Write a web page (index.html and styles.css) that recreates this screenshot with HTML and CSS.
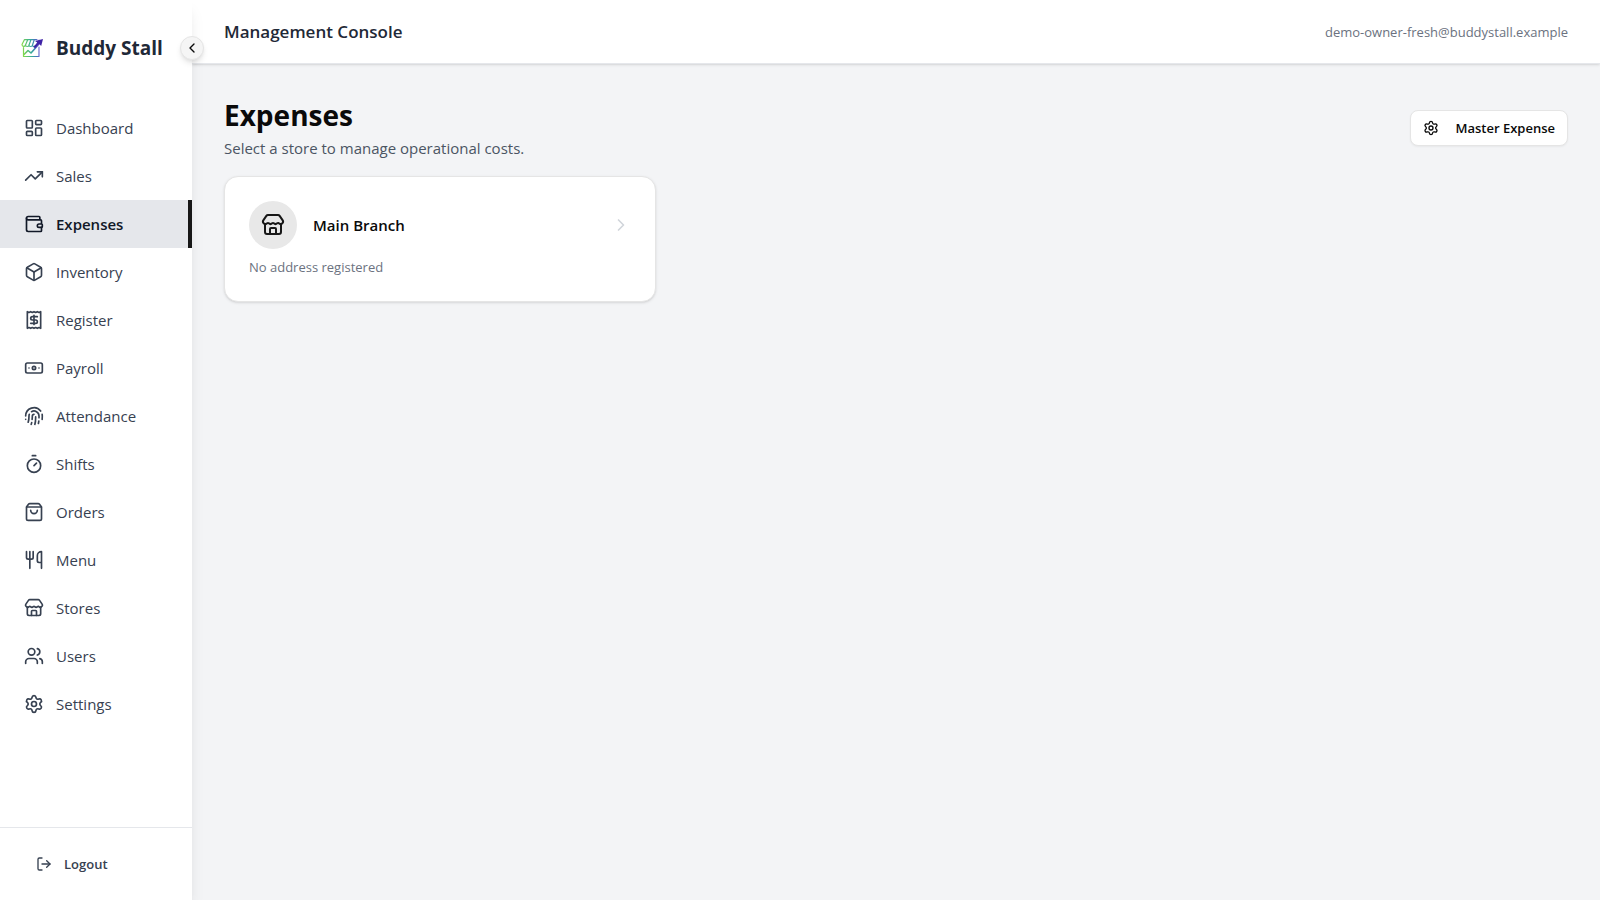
FILE: index.html
```html
<!DOCTYPE html>
<html lang="en">
<head>
    <meta charset="UTF-8">
    <meta name="viewport" content="width=device-width, initial-scale=1">
    <title>Buddy Stall</title>
    <link rel="stylesheet" href="styles.css">
</head>
<body>
    <div class="app">
        <aside class="sidebar">
            <div class="brand">
                <svg class="logo" viewBox="0 0 24 24" fill="none" aria-hidden="true">
                    <defs>
                        <linearGradient id="logoFill" gradientUnits="userSpaceOnUse" x1="1" y1="11" x2="21" y2="9">
                            <stop offset="0" stop-color="#8fe23c"/>
                            <stop offset=".5" stop-color="#35a99a"/>
                            <stop offset=".75" stop-color="#4a6fc0"/>
                            <stop offset="1" stop-color="#9a6fe0"/>
                        </linearGradient>
                    </defs>
                    <g stroke="url(#logoFill)" stroke-width="1.2" stroke-linejoin="round" stroke-linecap="round">
                        <path d="M17 3.600H4.500L2 8.500c0 2.500 3 2.500 3.500.5 0 2 3.500 2 3.500 0 0 2 3.500 2 3.500 0 0 1.500 1.500 2 2.500 1M7.800 3.600L5.500 9M11 3.600L9 9M14.300 3.600L12.500 9"/>
                        <path d="M3.500 11.500v9H19V11M19 4v2"/>
                        <path d="M4 18.500l4-4 3 2.500L19 8" stroke-width="1.600"/>
                    </g>
                    <path d="M23 3l-8 2 2.200 1.500-3.700 4.500 1.500 1.200 4.200-4.200 2 2z" fill="#3f23a6"/>
                </svg>
                <span class="brand-name">Buddy Stall</span>
                <button class="toggle" type="button" aria-label="Collapse sidebar">
                    <svg class="icon icon-sm" viewBox="0 0 24 24"><path d="m15 18-6-6 6-6"/></svg>
                </button>
            </div>
            <nav class="nav">
                <a class="nav-link" href="#">
                    <svg class="icon" viewBox="0 0 24 24"><rect width="7" height="9" x="3" y="3" rx="1"/><rect width="7" height="5" x="14" y="3" rx="1"/><rect width="7" height="9" x="14" y="12" rx="1"/><rect width="7" height="5" x="3" y="16" rx="1"/></svg>
                    <span>Dashboard</span>
                </a>
                <a class="nav-link" href="#">
                    <svg class="icon" viewBox="0 0 24 24"><path d="M16 7h6v6"/><path d="m22 7-8.500 8.500-5-5L2 17"/></svg>
                    <span>Sales</span>
                </a>
                <a class="nav-link active" href="#" aria-current="page">
                    <svg class="icon" viewBox="0 0 24 24"><path d="M19 7V4a1 1 0 0 0-1-1H5a2 2 0 0 0 0 4h15a1 1 0 0 1 1 1v4h-3a2 2 0 0 0 0 4h3a1 1 0 0 0 1-1v-2a1 1 0 0 0-1-1"/><path d="M3 5v14a2 2 0 0 0 2 2h15a1 1 0 0 0 1-1v-4"/></svg>
                    <span>Expenses</span>
                </a>
                <a class="nav-link" href="#">
                    <svg class="icon" viewBox="0 0 24 24"><path d="M21 8a2 2 0 0 0-1-1.730l-7-4a2 2 0 0 0-2 0l-7 4A2 2 0 0 0 3 8v8a2 2 0 0 0 1 1.730l7 4a2 2 0 0 0 2 0l7-4A2 2 0 0 0 21 16Z"/><path d="m3.300 7 8.700 5 8.700-5"/><path d="M12 22V12"/></svg>
                    <span>Inventory</span>
                </a>
                <a class="nav-link" href="#">
                    <svg class="icon" viewBox="0 0 24 24"><path d="M4 2v20l2-1 2 1 2-1 2 1 2-1 2 1 2-1 2 1V2l-2 1-2-1-2 1-2-1-2 1-2-1-2 1Z"/><path d="M16 8h-6a2 2 0 1 0 0 4h4a2 2 0 1 1 0 4H8"/><path d="M12 17.500v-11"/></svg>
                    <span>Register</span>
                </a>
                <a class="nav-link" href="#">
                    <svg class="icon" viewBox="0 0 24 24"><rect width="20" height="12" x="2" y="6" rx="2"/><circle cx="12" cy="12" r="2"/><path d="M6 12h.01M18 12h.01"/></svg>
                    <span>Payroll</span>
                </a>
                <a class="nav-link" href="#">
                    <svg class="icon" viewBox="0 0 24 24"><path d="M12 10a2 2 0 0 0-2 2c0 1.020-.1 2.510-.26 4"/><path d="M14 13.120c0 2.380 0 6.380-1 8.880"/><path d="M17.290 21.020c.12-.6.430-2.300.5-3.020"/><path d="M2 12a10 10 0 0 1 18-6"/><path d="M2 16h.01"/><path d="M21.800 16c.2-2 .131-5.354 0-6"/><path d="M5 19.500C5.500 18 6 15 6 12a6 6 0 0 1 .34-2"/><path d="M8.650 22c.21-.66.450-1.320.570-2"/><path d="M9 6.800a6 6 0 0 1 9 5.200v2"/></svg>
                    <span>Attendance</span>
                </a>
                <a class="nav-link" href="#">
                    <svg class="icon" viewBox="0 0 24 24"><path d="M10 2h4"/><path d="m12 14 3-3"/><circle cx="12" cy="14" r="8"/></svg>
                    <span>Shifts</span>
                </a>
                <a class="nav-link" href="#">
                    <svg class="icon" viewBox="0 0 24 24"><path d="M16 10a4 4 0 0 1-8 0"/><path d="M3.103 6.034h17.794"/><path d="M3.400 5.467a2 2 0 0 0-.4 1.200V20a2 2 0 0 0 2 2h14a2 2 0 0 0 2-2V6.667a2 2 0 0 0-.4-1.200l-2-2.667A2 2 0 0 0 17 2H7a2 2 0 0 0-1.600.8z"/></svg>
                    <span>Orders</span>
                </a>
                <a class="nav-link" href="#">
                    <svg class="icon" viewBox="0 0 24 24"><path d="M3 2v7c0 1.100.9 2 2 2h4a2 2 0 0 0 2-2V2"/><path d="M7 2v20"/><path d="M21 15V2a5 5 0 0 0-5 5v6c0 1.100.9 2 2 2h3Zm0 0v7"/></svg>
                    <span>Menu</span>
                </a>
                <a class="nav-link" href="#">
                    <svg class="icon" viewBox="0 0 24 24"><path d="M15 21v-5a1 1 0 0 0-1-1h-4a1 1 0 0 0-1 1v5"/><path d="M17.774 10.310a1.120 1.120 0 0 0-1.549 0 2.500 2.500 0 0 1-3.451 0 1.120 1.120 0 0 0-1.548 0 2.500 2.500 0 0 1-3.452 0 1.120 1.120 0 0 0-1.549 0 2.500 2.500 0 0 1-3.770-3.248l2.889-4.184A2 2 0 0 1 7 2h10a2 2 0 0 1 1.653.873l2.895 4.192a2.500 2.500 0 0 1-3.774 3.244"/><path d="M4 10.950V19a2 2 0 0 0 2 2h12a2 2 0 0 0 2-2v-8.050"/></svg>
                    <span>Stores</span>
                </a>
                <a class="nav-link" href="#">
                    <svg class="icon" viewBox="0 0 24 24"><path d="M16 21v-2a4 4 0 0 0-4-4H6a4 4 0 0 0-4 4v2"/><path d="M16 3.128a4 4 0 0 1 0 7.744"/><path d="M22 21v-2a4 4 0 0 0-3-3.870"/><circle cx="9" cy="7" r="4"/></svg>
                    <span>Users</span>
                </a>
                <a class="nav-link" href="#">
                    <svg class="icon" viewBox="0 0 24 24"><path d="M9.671 4.136a2.340 2.340 0 0 1 4.659 0 2.340 2.340 0 0 0 3.319 1.915 2.340 2.340 0 0 1 2.330 4.033 2.340 2.340 0 0 0 0 3.831 2.340 2.340 0 0 1-2.330 4.033 2.340 2.340 0 0 0-3.319 1.915 2.340 2.340 0 0 1-4.659 0 2.340 2.340 0 0 0-3.320-1.915 2.340 2.340 0 0 1-2.330-4.033 2.340 2.340 0 0 0 0-3.831A2.340 2.340 0 0 1 6.350 6.051a2.340 2.340 0 0 0 3.319-1.915"/><circle cx="12" cy="12" r="3"/></svg>
                    <span>Settings</span>
                </a>
            </nav>
            <div class="sidebar-footer">
                <button class="logout" type="button">
                    <svg class="icon icon-sm" viewBox="0 0 24 24"><path d="m16 17 5-5-5-5"/><path d="M21 12H9"/><path d="M9 21H5a2 2 0 0 1-2-2V5a2 2 0 0 1 2-2h4"/></svg>
                    <span>Logout</span>
                </button>
            </div>
        </aside>
        <div class="content">
            <header class="topbar">
                <h2 class="topbar-title">Management Console</h2>
                <span class="topbar-user">demo-owner-fresh@buddystall.example</span>
            </header>
            <main class="main">
                <div class="page-head">
                    <div>
                        <h1 class="page-title">Expenses</h1>
                        <p class="page-desc">Select a store to manage operational costs.</p>
                    </div>
                    <button class="master-btn" type="button">
                        <svg class="icon icon-sm" viewBox="0 0 24 24"><path d="M9.671 4.136a2.340 2.340 0 0 1 4.659 0 2.340 2.340 0 0 0 3.319 1.915 2.340 2.340 0 0 1 2.330 4.033 2.340 2.340 0 0 0 0 3.831 2.340 2.340 0 0 1-2.330 4.033 2.340 2.340 0 0 0-3.319 1.915 2.340 2.340 0 0 1-4.659 0 2.340 2.340 0 0 0-3.320-1.915 2.340 2.340 0 0 1-2.330-4.033 2.340 2.340 0 0 0 0-3.831A2.340 2.340 0 0 1 6.350 6.051a2.340 2.340 0 0 0 3.319-1.915"/><circle cx="12" cy="12" r="3"/></svg>
                        <span>Master Expense</span>
                    </button>
                </div>
                <div class="store-grid">
                    <a class="store-card" href="#">
                        <div class="store-row">
                            <span class="store-icon">
                                <svg class="icon icon-lg" viewBox="0 0 24 24"><path d="M15 21v-5a1 1 0 0 0-1-1h-4a1 1 0 0 0-1 1v5"/><path d="M17.774 10.310a1.120 1.120 0 0 0-1.549 0 2.500 2.500 0 0 1-3.451 0 1.120 1.120 0 0 0-1.548 0 2.500 2.500 0 0 1-3.452 0 1.120 1.120 0 0 0-1.549 0 2.500 2.500 0 0 1-3.770-3.248l2.889-4.184A2 2 0 0 1 7 2h10a2 2 0 0 1 1.653.873l2.895 4.192a2.500 2.500 0 0 1-3.774 3.244"/><path d="M4 10.950V19a2 2 0 0 0 2 2h12a2 2 0 0 0 2-2v-8.050"/></svg>
                            </span>
                            <h3 class="store-name">Main Branch</h3>
                            <svg class="icon store-arrow" viewBox="0 0 24 24"><path d="m9 18 6-6-6-6"/></svg>
                        </div>
                        <p class="store-address">No address registered</p>
                    </a>
                </div>
            </main>
        </div>
    </div>
</body>
</html>
```
FILE: styles.css
```css
*{box-sizing:border-box;margin:0;padding:0}
body{font-family:"Open Sans","Noto Sans",sans-serif;font-size:15px;line-height:24px;color:#0a0a0a;background:#f3f4f6}
a{color:inherit;text-decoration:none}
button{font:inherit;color:inherit;border:0;background:none;cursor:pointer}
.app{display:flex;min-height:100vh}

.icon{width:20px;height:20px;flex:none;fill:none;stroke:currentColor;stroke-width:2;stroke-linecap:round;stroke-linejoin:round}
.icon-sm{width:16px;height:16px}
.icon-lg{width:24px;height:24px}

/* sidebar */
.sidebar{position:relative;z-index:1;display:flex;flex-direction:column;flex:none;width:192px;background:#fff;box-shadow:0 10px 15px -3px rgba(0,0,0,.1),0 4px 6px -4px rgba(0,0,0,.1)}
.brand{position:relative;display:flex;align-items:center;gap:12px;height:96px;padding-left:20px}
.logo{width:24px;height:24px;flex:none}
.brand-name{font-size:19px;font-weight:700;line-height:25px;color:#1f2937;white-space:nowrap}
.toggle{position:absolute;top:36px;right:-12px;display:flex;align-items:center;justify-content:center;width:24px;height:24px;border:1px solid #e5e5e5;border-radius:50%;background:#f5f5f5;box-shadow:0 4px 6px -1px rgba(0,0,0,.1),0 2px 4px -2px rgba(0,0,0,.1)}
.nav{flex:1;padding-top:8px}
.nav-link{display:flex;align-items:center;gap:12px;height:48px;padding-left:24px;color:#374151}
.nav-link.active{border-right:4px solid #171717;background:#e5e7eb;color:#111827;font-weight:600}
.sidebar-footer{padding:16px;border-top:1px solid #e5e7eb}
.logout{display:flex;align-items:center;gap:12px;width:100%;height:40px;padding-left:20px;font-size:13px;font-weight:600;color:#374151}

/* top bar */
.content{display:flex;flex-direction:column;flex:1;min-width:0}
.topbar{display:flex;align-items:center;justify-content:space-between;height:64px;padding:0 32px;border-bottom:1px solid #e5e7eb;background:#fff;box-shadow:0 1px 3px rgba(0,0,0,.1),0 1px 2px -1px rgba(0,0,0,.1)}
.topbar-title{font-size:17px;font-weight:600;line-height:25px;color:#1f2937}
.topbar-user{font-size:13px;color:#6b7280}

/* expenses */
.main{padding:32px}
.page-head{display:flex;align-items:center;justify-content:space-between;margin-bottom:16px}
.page-title{margin-bottom:2px;font-size:28px;font-weight:700;line-height:38px}
.page-desc{color:#4b5563}
.master-btn{display:flex;align-items:center;gap:16px;height:36px;padding:0 12px;border:1px solid #e5e5e5;border-radius:8px;background:#fff;font-size:13px;font-weight:600;box-shadow:0 1px 2px rgba(0,0,0,.05)}
.store-grid{display:grid;grid-template-columns:repeat(3,1fr);gap:24px}
.store-card{padding:24px;border:1px solid #e5e5e5;border-radius:14px;background:#fff;box-shadow:0 1px 3px rgba(0,0,0,.1),0 1px 2px -1px rgba(0,0,0,.1)}
.store-row{display:flex;align-items:center;gap:16px;margin-bottom:8px}
.store-icon{display:flex;align-items:center;justify-content:center;width:48px;height:48px;border-radius:50%;background:#e8e8e8;color:#171717}
.store-name{flex:1;font-size:15px;font-weight:600}
.store-arrow{color:#d1d5db}
.store-address{font-size:13px;line-height:20px;color:#6b7280}
```
